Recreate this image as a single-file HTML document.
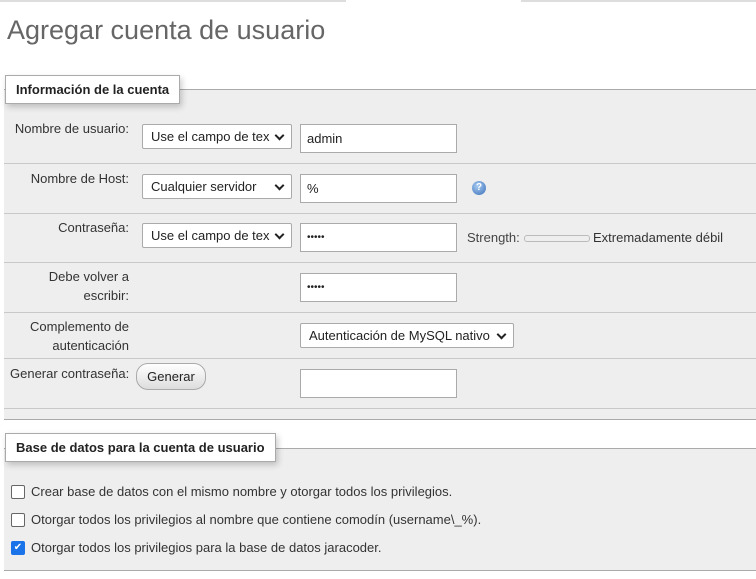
<!DOCTYPE html><html><head><style>
body{margin:0;width:756px;height:579px;background:#fff;font-family:"Liberation Sans",sans-serif;font-size:13px;color:#333;position:relative;overflow:hidden}
.a{position:absolute}
.fs{position:absolute;left:4px;right:-2px;background:#eee;border-top:1px solid #aaa;border-bottom:1px solid #aaa}
.lg{position:absolute;background:#fff;border:1px solid #aaa;box-shadow:2px 3px 6px rgba(0,0,0,.2);font-weight:bold;font-size:13px;color:#222;padding:0 10px;height:27px;line-height:27px}
.sep{position:absolute;left:4px;right:0;height:1px;background:#c8c8c8}
.lb{position:absolute;text-align:right;width:125px;left:4px;line-height:19px}
.sel{position:absolute;left:142px;background:#fff;border:1px solid #aaa;border-radius:2px;line-height:23px;padding-left:8px;box-sizing:border-box;width:150px;height:25px;font-size:13px;color:#222}
.sel:after{content:"";position:absolute;right:8px;top:7px;width:5px;height:5px;border-right:2px solid #222;border-bottom:2px solid #222;transform:rotate(45deg)}
.in{position:absolute;left:300px;width:157px;height:29px;background:#fff;border:1px solid #aaa;box-sizing:border-box;padding-left:6px;line-height:27px;color:#222}
.cb{position:absolute;left:11px;width:12px;height:12px;border:1px solid #666;border-radius:2px;background:#fff}
.ct{position:absolute;left:31px;color:#333}
</style></head><body>
<div class="a" style="left:0;top:0;width:756px;height:2px;background:#ddd"></div>
<div class="a" style="left:346px;top:0;width:175px;height:2px;background:#fff"></div>
<div class="a" style="left:7px;top:15px;font-size:27px;color:#666">Agregar cuenta de usuario</div>

<div class="fs" style="top:89px;height:329px"></div>
<div class="lg" style="left:5px;top:75px">Información de la cuenta</div>
<div class="sep" style="top:163px"></div><div class="sep" style="top:213px"></div><div class="sep" style="top:262px"></div><div class="sep" style="top:312px"></div><div class="sep" style="top:358px"></div><div class="sep" style="top:408px"></div>

<div class="lb" style="top:119px">Nombre de usuario:</div>
<div class="sel" style="top:124px">Use el campo de tex</div>
<div class="in" style="top:124px">admin</div>

<div class="lb" style="top:169px">Nombre de Host:</div>
<div class="sel" style="top:174px">Cualquier servidor</div>
<div class="in" style="top:174px">%</div>
<div class="a" style="left:472px;top:181px;width:14px;height:14px;border-radius:50%;background:radial-gradient(circle at 40% 35%,#a8cbf2,#3a6fb8);color:#fff;font-size:10px;font-weight:bold;text-align:center;line-height:14px">?</div>

<div class="lb" style="top:218px">Contraseña:</div>
<div class="sel" style="top:223px">Use el campo de tex</div>
<div class="in" style="top:223px;font-size:10px">•••••</div>
<div class="a" style="left:467px;top:230px;color:#444">Strength:</div>
<div class="a" style="left:524px;top:235px;width:64px;height:5px;border:1px solid #bbb;border-radius:3px;background:#eee"></div>
<div class="a" style="left:593px;top:230px;color:#333">Extremadamente débil</div>

<div class="lb" style="top:267px">Debe volver a<br>escribir:</div>
<div class="in" style="top:273px;font-size:10px">•••••</div>

<div class="lb" style="top:317px">Complemento de<br>autenticación</div>
<div class="sel" style="top:323px;left:300px;width:214px">Autenticación de MySQL nativo</div>

<div class="a" style="left:10px;top:366px">Generar contraseña:</div>
<div class="a" style="left:136px;top:363px;width:68px;height:25px;border:1px solid #aaa;border-radius:12px;background:linear-gradient(#fff,#ddd);text-align:center;line-height:25px;color:#222">Generar</div>
<div class="in" style="top:369px"></div>

<div class="fs" style="top:448px;height:121px"></div>
<div class="lg" style="left:5px;top:433px">Base de datos para la cuenta de usuario</div>
<div class="cb" style="top:485px"></div><div class="ct" style="top:484px">Crear base de datos con el mismo nombre y otorgar todos los privilegios.</div>
<div class="cb" style="top:513px"></div><div class="ct" style="top:512px">Otorgar todos los privilegios al nombre que contiene comodín (username\_%).</div>
<div class="cb" style="top:541px;background:#1a73e8;border-color:#1a73e8;color:#fff;font-size:10px;line-height:12px;text-align:center">✔</div><div class="ct" style="top:540px">Otorgar todos los privilegios para la base de datos jaracoder.</div>
</body></html>
